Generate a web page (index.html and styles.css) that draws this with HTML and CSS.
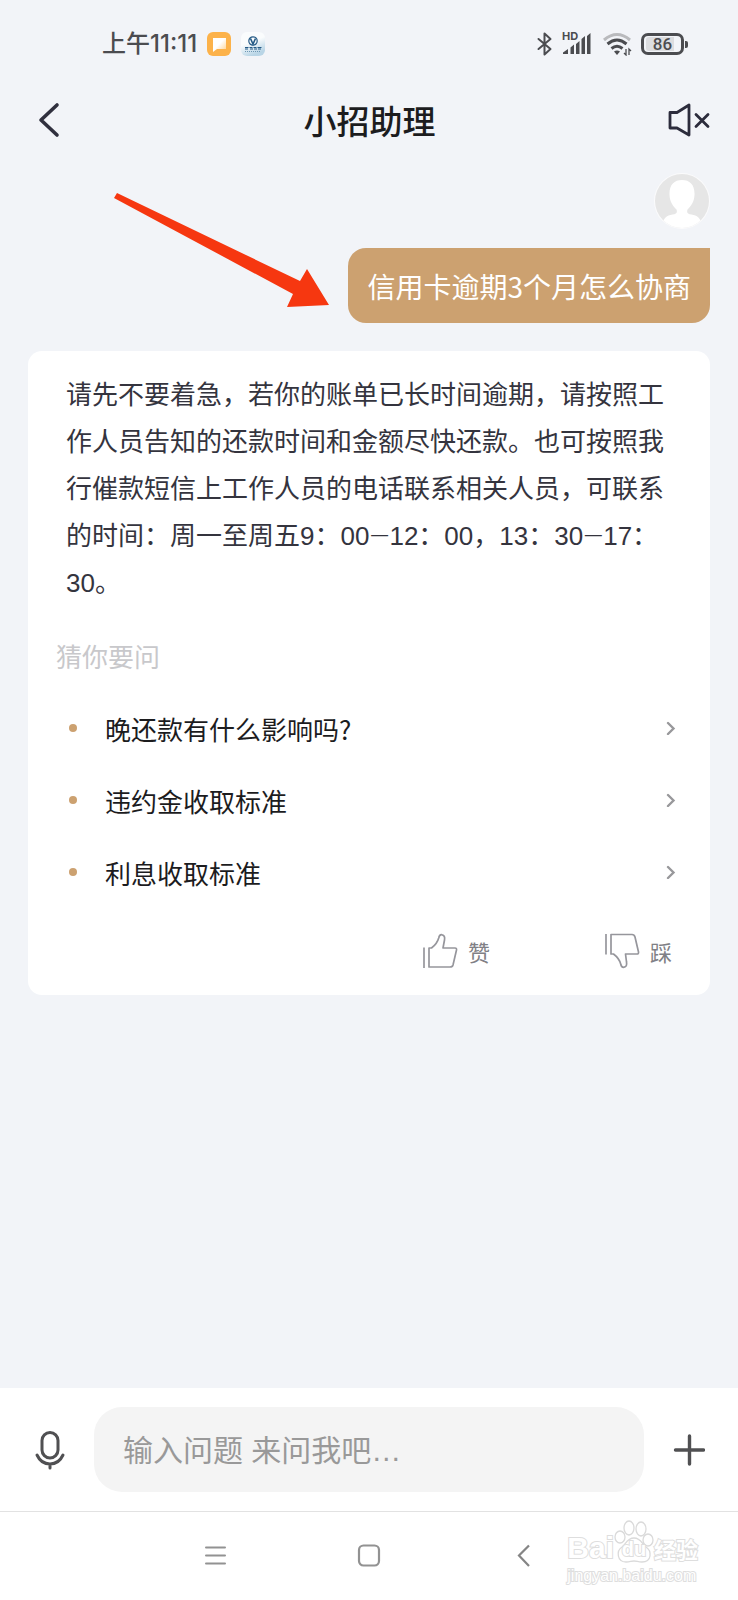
FILE: index.html
```html
<!DOCTYPE html>
<html lang="zh-CN">
<head>
<meta charset="utf-8">
<meta name="viewport" content="width=device-width, initial-scale=1">
<title>小招助理</title>
<link rel="stylesheet" href="styles.css">
</head>
<body>
<div class="status-bar">
  <div class="status-left">
    <span class="clock">上午11:11</span>
    <svg class="app-icon" width="24" height="24" viewBox="0 0 24 24" aria-hidden="true">
      <defs><linearGradient id="fold" x1="0" y1="0" x2="1" y2="1"><stop offset=".45" stop-color="#fff"/><stop offset="1" stop-color="#ffd08a"/></linearGradient></defs>
      <rect width="24" height="24" rx="6" fill="#fcb24a"/>
      <path d="M6 6h13v11H10l-4 3z" fill="url(#fold)"/>
    </svg>
    <svg class="app-icon" width="24" height="24" viewBox="0 0 24 24" aria-hidden="true">
      <defs><linearGradient id="sky" x1="0" y1="0" x2=".4" y2="1"><stop offset=".5" stop-color="#fafcfd"/><stop offset="1" stop-color="#b9d5e6"/></linearGradient></defs>
      <rect width="24" height="24" rx="6" fill="url(#sky)"/>
      <circle cx="12" cy="9" r="4.200" fill="none" stroke="#245a86" stroke-width="1.200"/>
      <path d="M9.500 6.500 12 12l2.500-5.500" fill="none" stroke="#245a86" stroke-width="1.600"/>
      <path d="M4 15.500h3.500m1 0h3m1 0h3m1 0h4M4 17h3m2 0h3m1 0h3m1 0h3" stroke="#245a86" stroke-width="1.200"/>
      <path d="M4 19.500h16" stroke="#6d96b3" stroke-width="1" stroke-dasharray="1 1"/>
    </svg>
  </div>
  <div class="status-right">
    <svg class="bluetooth" width="16" height="24" viewBox="0 0 16 24" fill="none" stroke="#4b4c50" stroke-width="2" stroke-linejoin="round" stroke-linecap="round" aria-hidden="true"><path d="M1.500 7l12 10-6 5.500v-21l6 5.500-12 10"/></svg>
    <div class="signal">
      <span class="hd">HD</span>
      <svg width="30" height="22" viewBox="0 0 30 22" fill="#4b4c50" aria-hidden="true"><path d="M1 19.500 6 16v5H1zM8.500 14.500l3.500-3V21H8.500zM14 11l3.500-3v13H14zM19.500 6 23 3v18h-3.500zM25 3l3.500-3v21H25z"/></svg>
    </div>
    <svg class="wifi" width="30" height="24" viewBox="0 0 30 24" fill="none" aria-hidden="true">
      <path d="M2 8Q15-3 28 8" stroke="#b9babd" stroke-width="3"/>
      <path d="M5.500 12q9.500-8 19 0M9.500 16.500q5.500-4.500 11 0" stroke="#4b4c50" stroke-width="3"/>
      <path d="M12 19.500q3-2 6 0L15 23z" fill="#4b4c50"/>
      <path d="M24 17v6l-2-2M27 23v-6l2 2" stroke="#4b4c50" stroke-width="1.300"/>
    </svg>
    <div class="battery"><span class="battery-body"><span class="battery-level">86</span></span><span class="battery-tip"></span></div>
  </div>
</div>

<header class="header">
  <button class="icon-button back" type="button" aria-label="返回">
    <svg width="24" height="38" viewBox="0 0 24 38" fill="none" stroke="#30303e" stroke-width="3.600" stroke-linecap="round" stroke-linejoin="round"><path d="M19 4 3 19l16 15"/></svg>
  </button>
  <h1 class="title">小招助理</h1>
  <button class="icon-button mute" type="button" aria-label="静音">
    <svg width="42" height="34" viewBox="0 0 42 34" fill="none" stroke="#2c2c3c" stroke-width="2.800" stroke-linejoin="round" stroke-linecap="round"><path d="M2 9.500h7L21 2v30L9 25H2zM28 11.500l12 12M40 11.500l-12 12"/></svg>
  </button>
</header>

<main class="chat">
  <svg class="avatar" width="56" height="56" viewBox="0 0 56 56" role="img" aria-label="用户头像">
    <defs><clipPath id="disc"><circle cx="28" cy="28" r="27"/></clipPath></defs>
    <circle cx="28" cy="28" r="28" fill="#fbfbfc"/>
    <g clip-path="url(#disc)"><rect width="56" height="56" fill="#e6e6e6"/>
    <path d="M28 7c-8 0-13 5-12.500 15 .3 7 3.500 11 7 14.500 1 3 0 4.500-4 5-6 .7-8.500 4-10 8V58h39v-8.500c-1.500-4-4-7.300-10-8-4-.5-5-2-4-5 3.500-3.500 6.700-7.500 7-14.500C41 12 36 7 28 7z" fill="#fff"/></g>
  </svg>
  <p class="bubble">信用卡逾期3个月怎么协商</p>

  <section class="card">
    <p class="answer">请先不要着急，若你的账单已长时间逾期，请按照工作人员告知的还款时间和金额尽快还款。也可按照我行催款短信上工作人员的电话联系相关人员，可联系的时间：周一至周五9：00<span class="dash">—</span>12：00，13：30<span class="dash">—</span>17：30。</p>
    <h2 class="suggest-title">猜你要问</h2>
    <ul class="suggestions">
      <li><a class="suggestion" href="#late"><span class="dot"></span><span class="question">晚还款有什么影响吗?</span><svg width="10" height="14" viewBox="0 0 10 14" fill="none" stroke="#98989b" stroke-width="2.400" stroke-linecap="round"><path d="M2 2 7.500 7.500 2 13"/></svg></a></li>
      <li><a class="suggestion" href="#penalty"><span class="dot"></span><span class="question">违约金收取标准</span><svg width="10" height="14" viewBox="0 0 10 14" fill="none" stroke="#98989b" stroke-width="2.400" stroke-linecap="round"><path d="M2 2 7.500 7.500 2 13"/></svg></a></li>
      <li><a class="suggestion" href="#interest"><span class="dot"></span><span class="question">利息收取标准</span><svg width="10" height="14" viewBox="0 0 10 14" fill="none" stroke="#98989b" stroke-width="2.400" stroke-linecap="round"><path d="M2 2 7.500 7.500 2 13"/></svg></a></li>
    </ul>
    <div class="actions">
      <button class="vote" type="button">
        <svg width="36" height="36" viewBox="0 0 36 36" fill="none" stroke="#96969c" stroke-width="1.700" stroke-linejoin="round"><path d="M2 14.500V35"/><path d="M7 15h2.500c4-3 6-5.500 7.200-10 .6-3 2-3.500 3.500-3.200 2.300.4 2.800 2.200 2.300 5.200L21 15h12c1.200 0 1.700.8 1.500 2l-3.500 15c-.4 1.500-1.500 2-3 2H7z"/></svg>
        <span>赞</span>
      </button>
      <button class="vote" type="button">
        <svg width="36" height="36" viewBox="0 0 36 36" fill="none" stroke="#96969c" stroke-width="1.700" stroke-linejoin="round"><path d="M2 1v20.500"/><path d="M7 21h2.500c4 3 6 5.500 7.200 10 .6 3 2 3.500 3.500 3.200 2.300-.4 2.800-2.200 2.300-5.200L21.500 21h11.500c1.200 0 1.700-.8 1.500-2L31 4c-.4-1.500-1.500-2.500-3-2.500H7z"/></svg>
        <span>踩</span>
      </button>
    </div>
  </section>

  <svg class="pointer" width="216" height="118" viewBox="0 0 216 118" aria-hidden="true"><path d="M3 0 186 88l7-12 22 36-42 2 6-13L0 5z" fill="#f63710"/></svg>
</main>

<form class="composer">
  <button class="icon-button" type="button" aria-label="语音输入">
    <svg width="30" height="40" viewBox="0 0 30 40" fill="none" stroke="#505052" stroke-width="3" stroke-linecap="round"><rect x="7" y="2.500" width="16" height="25.500" rx="8"/><path d="M2 25c3 6.500 7.500 9 13 9s10-2.500 13-9M15 34v4"/></svg>
  </button>
  <input class="message" type="text" aria-label="输入问题" placeholder="输入问题 来问我吧…">
  <button class="icon-button" type="button" aria-label="更多">
    <svg width="32" height="32" viewBox="0 0 32 32" fill="none" stroke="#505052" stroke-width="3.400" stroke-linecap="round"><path d="M16.500 2v28M2.500 16h28"/></svg>
  </button>
</form>

<nav class="nav-bar" aria-label="系统导航">
  <button class="icon-button" type="button" aria-label="最近任务"><svg width="24" height="24" viewBox="0 0 24 24" stroke="#929292" stroke-width="2" stroke-linecap="round"><path d="M3 3.500h19M3 11.500h19M3 19.500h19"/></svg></button>
  <button class="icon-button" type="button" aria-label="主屏幕"><svg width="24" height="24" viewBox="0 0 24 24" fill="none" stroke="#929292" stroke-width="2.200"><rect x="2" y="1.500" width="20" height="20" rx="4.500"/></svg></button>
  <button class="icon-button" type="button" aria-label="返回上一页"><svg width="24" height="24" viewBox="0 0 24 24" fill="none" stroke="#858585" stroke-width="2.200"><path d="M18 1.500 8 11.500 18 22"/></svg></button>
  <div class="watermark">
    <div class="brand">
      <span class="brand-name">Bai</span>
      <span class="paw">
        <svg width="40" height="44" viewBox="0 0 40 44" fill="#fff" stroke="#dadada" stroke-width="1.300" aria-hidden="true"><ellipse cx="6" cy="17" rx="5" ry="6"/><ellipse cx="15" cy="8" rx="5" ry="7"/><ellipse cx="27" cy="9" rx="5" ry="7"/><ellipse cx="34" cy="20" rx="5" ry="6"/><path d="M20 18c-7 0-8 6-12 9-6 4-5 15 4 15 4 0 5-1 8-1s4 1 8 1c10 0 10-11 4-15-4-3-5-9-12-9z"/></svg>
        <span class="paw-text">du</span>
      </span>
      <span class="brand-cn">经验</span>
    </div>
    <div class="site">jingyan.baidu.com</div>
  </div>
</nav>
</body>
</html>
```

FILE: styles.css
```css
* {
  box-sizing: border-box;
}

body {
  display: flex;
  flex-direction: column;
  min-height: 100vh;
  margin: 0;
  background: #f2f4f8;
  color: #222;
  font-family: "Noto Sans CJK SC", sans-serif;
}

h1,
h2,
p,
ul {
  margin: 0;
  padding: 0;
}

button {
  padding: 0;
  border: 0;
  background: none;
  color: inherit;
  font: inherit;
}

svg {
  display: block;
  flex: none;
}

.status-bar {
  display: flex;
  align-items: center;
  justify-content: space-between;
  height: 88px;
  padding: 0 50px 0 102px;
  color: #4b4c50;
}

.status-left,
.status-right {
  display: flex;
  align-items: center;
}

.status-left {
  gap: 10px;
}

.clock {
  font: 500 24px/32px Inter, "Noto Sans CJK SC", sans-serif;
}

.bluetooth {
  margin-right: 9px;
}

.signal {
  position: relative;
  margin-right: 10px;
}

.hd {
  position: absolute;
  top: -2px;
  left: 0;
  font: 700 11px/11px Inter, sans-serif;
}

.wifi {
  margin-right: 9px;
}

.battery {
  display: flex;
  align-items: center;
  gap: 1px;
}

.battery-body {
  width: 43px;
  padding: 1px 2px;
  border: 3px solid #4b4c50;
  border-radius: 7px;
}

.battery-level {
  display: block;
  border-radius: 3px;
  background: linear-gradient(90deg, #dcdde0 86%, transparent 86%);
  font: 500 17px/14px Roboto, sans-serif;
  text-align: center;
}

.battery-tip {
  width: 3px;
  height: 7px;
  border-radius: 0 2px 2px 0;
  background: #4b4c50;
}

.header {
  display: grid;
  grid-template-columns: 1fr auto 1fr;
  align-items: center;
  height: 64px;
  padding: 0 28px 0 38px;
}

.back {
  justify-self: start;
}

.mute {
  justify-self: end;
}

.title {
  padding-right: 9px;
  color: #1c1c1e;
  font-size: 33px;
  font-weight: 500;
  line-height: 48px;
}

.chat {
  position: relative;
  display: flex;
  flex: 1;
  flex-direction: column;
  padding: 21px 28px 28px;
}

.avatar {
  align-self: flex-end;
}

.bubble {
  align-self: flex-end;
  margin-top: 19px;
  padding: 18px 19px 17px;
  border-radius: 18px 0 18px 18px;
  background: #cca170;
  color: #fff;
  font-size: 28px;
  line-height: 40px;
}

.pointer {
  position: absolute;
  top: 41px;
  left: 114px;
}

.card {
  margin-top: 28px;
  padding: 21px 28px 26px;
  border-radius: 14px;
  background: #fff;
}

.answer {
  padding: 0 8px 0 10px;
  color: #34343e;
  font: 26px/47px "Liberation Sans", "Noto Sans CJK SC", sans-serif;
}

.dash {
  font-family: Roboto, sans-serif;
  font-weight: 300;
}

.suggest-title {
  margin-top: 31px;
  color: #c8c8cb;
  font-size: 26px;
  font-weight: 400;
  line-height: 36px;
}

.suggestions {
  margin-top: 18px;
  list-style: none;
}

.suggestion {
  display: flex;
  align-items: center;
  height: 72px;
  padding: 0 6px 0 13px;
  color: #1c1c1e;
  font-size: 26px;
  text-decoration: none;
}

.dot {
  width: 8px;
  height: 8px;
  border-radius: 50%;
  background: #cca170;
}

.question {
  flex: 1;
  padding-left: 28px;
}

.actions {
  display: flex;
  justify-content: flex-end;
  gap: 114px;
  padding: 25px 10px 0 0;
}

.vote {
  display: flex;
  align-items: center;
  gap: 10px;
  color: #808085;
  font-size: 22px;
  line-height: 36px;
}

.composer {
  display: flex;
  align-items: center;
  gap: 29px;
  padding: 19px 33px 19px 35px;
  background: #fff;
}

.message {
  flex: 1;
  min-width: 0;
  height: 85px;
  padding: 2px 29px 0;
  border: 0;
  border-radius: 28px;
  background: #f4f4f4;
  color: #333;
  font: 30px/40px "Liberation Sans", "Noto Sans CJK SC", sans-serif;
}

.message::placeholder {
  color: #999;
  opacity: 1;
}

.nav-bar {
  position: relative;
  display: flex;
  align-items: center;
  justify-content: center;
  gap: 130px;
  height: 89px;
  border-top: 1px solid #e2e2e2;
  background: #fff;
}

.watermark {
  position: absolute;
  right: 40px;
  bottom: 15px;
  color: #fff;
  paint-order: stroke fill;
  -webkit-text-stroke: 2px #dedede;
}

.brand {
  display: flex;
  align-items: flex-end;
}

.brand-name {
  font: 700 30px/32px "Liberation Sans", sans-serif;
}

.paw {
  position: relative;
}

.paw svg {
  paint-order: normal;
}

.paw-text {
  position: absolute;
  right: 0;
  bottom: 5px;
  left: 0;
  font: 700 20px/20px "Liberation Sans", sans-serif;
  text-align: center;
}

.brand-cn {
  font-size: 22px;
  font-weight: 700;
  line-height: 32px;
}

.site {
  margin-top: 3px;
  font: 16px/18px "Liberation Sans", sans-serif;
}
```
